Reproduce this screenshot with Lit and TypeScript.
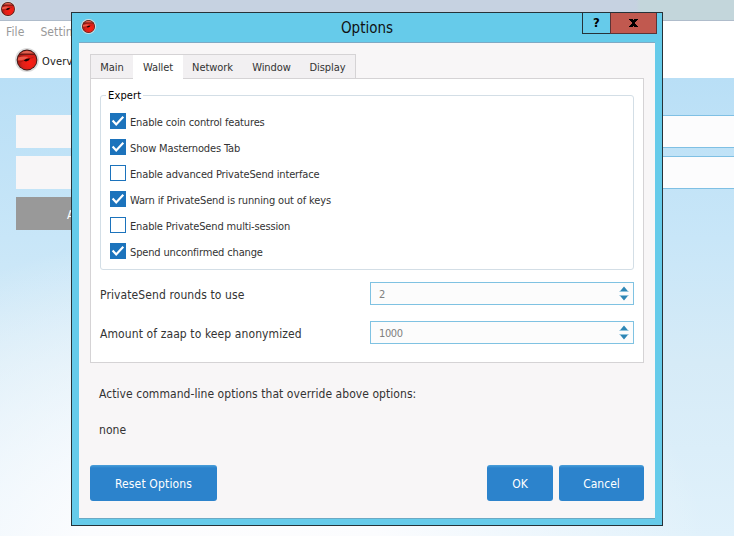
import { LitElement, html, css } from "lit";
import { customElement, property } from "lit/decorators.js";
import { classMap } from "lit/directives/class-map.js";

@customElement("app-logo")
class AppLogo extends LitElement {
  static styles = css`
    :host { display: block; }
    svg { display: block; width: 100%; height: 100%; }
  `;
  render() {
    return html`<svg viewBox="0 0 24 24">
      <defs>
        <radialGradient id="g" cx=".65" cy=".66" r=".65">
          <stop offset="0" stop-color="#ff1d12" />
          <stop offset=".6" stop-color="#dc2019" />
          <stop offset="1" stop-color="#9a1a14" />
        </radialGradient>
      </defs>
      <circle cx="12" cy="12" r="12" fill="#dcdcdc" />
      <circle cx="12" cy="12" r="10.4" fill="#3a1a18" />
      <circle cx="12" cy="12" r="9.5" fill="url(#g)" />
      <path d="M4.8 5.8Q12 -.2 19.2 5.8Z" fill="#e0604f" />
      <path d="M4 6.2H20" stroke="#5a1713" stroke-width="1.1" />
      <path d="M3.2 9.6Q8 7.6 13.5 9L10 11.2Q6 12.4 2.8 12.4Z" fill="#ea5a4a" />
      <path d="M8.6 12.6L11 11L15 10.3L14 12.2L11 13.4Z" fill="#120303" />
      <path d="M15 10.4L18.5 9.4M4.4 14.2L8.6 12.8" stroke="#9a1812" stroke-width=".6" />
    </svg>`;
  }
}

@customElement("check-row")
class CheckRow extends LitElement {
  @property() label = "";
  @property({ type: Boolean }) checked = false;
  static styles = css`
    :host { display: flex; align-items: center; height: 16px; gap: 4px; }
    .box { box-sizing: border-box; width: 16px; height: 16px; border: 1px solid #1c73bc; background: #fff; }
    .box.on { background: #1c73bc; }
    svg { display: block; width: 14px; height: 14px; }
    .text { font-size: 11px; letter-spacing: -0.15px; line-height: 16px; padding-top: 3px; white-space: nowrap; color: #333; }
  `;
  render() {
    return html`<span class=${classMap({ box: true, on: this.checked })}>
        ${this.checked
          ? html`<svg viewBox="0 0 14 14"><path d="M1.6 6.6L5.2 10.4L12.3 2.8" fill="none" stroke="#fff" stroke-width="2.2" /></svg>`
          : ""}
      </span><span class="text">${this.label}</span>`;
  }
}

@customElement("spin-box")
class SpinBox extends LitElement {
  @property() value = "";
  static styles = css`
    :host { box-sizing: border-box; display: flex; justify-content: space-between; align-items: center;
      width: 264px; height: 23px; border: 1px solid #7fc2e2; background: #fcfcfc; padding: 0 4px 0 8px; }
    .value { font-size: 11px; letter-spacing: -0.4px; line-height: 21px; color: #808080; padding-top: 2px; }
    svg { display: block; width: 10px; height: 15px; }
  `;
  render() {
    return html`<span class="value">${this.value}</span>
      <svg viewBox="0 0 10 15">
        <path d="M.8 5.5L5 .5L9.2 5.5Z M.8 9.5L5 14.5L9.2 9.5Z" fill="#2e86b5" />
        <path d="M.5 5.5h9M.5 9.5h9" stroke="#8fc3dc" stroke-width="1" />
      </svg>`;
  }
}

const TABS = ["Main", "Wallet", "Network", "Window", "Display"];

const OPTIONS: [string, boolean][] = [
  ["Enable coin control features", true],
  ["Show Masternodes Tab", true],
  ["Enable advanced PrivateSend interface", false],
  ["Warn if PrivateSend is running out of keys", true],
  ["Enable PrivateSend multi-session", false],
  ["Spend unconfirmed change", true],
];

@customElement("options-dialog")
class OptionsDialog extends LitElement {
  static styles = css`
    :host { box-sizing: border-box; display: flex; flex-direction: column; width: 592px; height: 514px;
      border: 1px solid #263238; background: #66cbea; padding: 0 7px 6px; color: #333; }
    .title { display: grid; grid-template-columns: 1fr auto 1fr; height: 29px; }
    .title app-logo { width: 15px; height: 15px; margin: 6px 0 0 2px; }
    .title h1 { margin: 0; font-weight: 400; font-size: 15px; line-height: 31px; color: #111; }
    .controls { display: flex; justify-content: flex-end; margin-right: -2px; }
    .ctl { box-sizing: border-box; height: 21px; border: 1px solid #263238; border-top: 0; display: grid; place-items: center;
      width: 29px; font: bold 13px/20px "DejaVu Sans Condensed", "DejaVu Sans", sans-serif; color: #000; }
    .ctl.close { width: 47px; margin-left: -1px; background: #c1594f; border-color: #5c3436; }
    .ctl svg { display: block; width: 9px; height: 8px; }
    .body { box-sizing: border-box; flex: 1; background: #f8f6f7; border-top: 1px solid #7fa9c4; border-bottom: 1px solid #6ba9c4;
      padding: 11px 11px 0; display: flex; flex-direction: column; }
    .tabs { box-sizing: border-box; display: flex; width: 266px; height: 24px; border: 1px solid #d5d3d5; border-bottom: 0; background: #f2f0f2; }
    .tab { font-size: 11px; letter-spacing: -0.08px; line-height: 25px; text-align: center; white-space: nowrap; }
    .tab.main { width: 42px; }
    .tab.wallet { width: 50px; background: #fff; margin-bottom: -1px; z-index: 1; }
    .tab.network { width: 59px; } .tab.window { width: 59px; } .tab.display { width: 53px; }
    .pane { box-sizing: border-box; height: 285px; border: 1px solid #d5d3d5; background: #fff; padding: 8px 9px 0; }
    fieldset { box-sizing: border-box; margin: 0; min-width: 0; width: 534px; height: 183px; border: 1px solid #d3dee6; border-radius: 3px; padding: 0 9px; }
    legend { padding: 1px 2px 0; margin: 0 0 0 -4px; font-size: 11px; letter-spacing: 0.15px; line-height: 16px; color: #000; }
    .checks { display: flex; flex-direction: column; gap: 10px; padding-top: 9px; }
    .row { display: flex; justify-content: space-between; align-items: center; height: 23px; margin-top: 12px; font-size: 12px; letter-spacing: 0.1px; }
    .row + .row { margin-top: 16px; }
    .row .label { padding-top: 2px; }
    .note { margin: 21px 0 0 9px; font-size: 12px; letter-spacing: 0.055px; line-height: 20px; white-space: nowrap; }
    .note + .note { margin-top: 16px; }
    .actions { display: flex; gap: 6px; margin-top: 25px; }
    button { box-sizing: border-box; height: 36px; border: 0; border-radius: 3px; padding: 1px 0 0; font: inherit; font-size: 12px; color: #fff;
      background: linear-gradient(#4ba0da 0, #2c83cc 3px); width: 85px; }
    .reset { width: 127px; margin-right: auto; letter-spacing: 0.15px; }
    .ok { width: 66px; }
  `;
  render() {
    return html`
      <div class="title">
        <app-logo></app-logo>
        <h1>Options</h1>
        <div class="controls">
          <span class="ctl">?</span>
          <span class="ctl close"><svg viewBox="0 0 9 8" shape-rendering="crispEdges"><path d="M0 0H4V1H5V0H9V1H8V2H7V3H6V5H7V6H8V7H9V8H5V7H4V8H0V7H1V6H2V5H3V3H2V2H1V1H0Z" fill="#000" /></svg></span>
        </div>
      </div>
      <div class="body">
        <div class="tabs">
          ${TABS.map((t) => html`<span class="tab ${t.toLowerCase()}">${t}</span>`)}
        </div>
        <div class="pane">
          <fieldset>
            <legend>Expert</legend>
            <div class="checks">
              ${OPTIONS.map(([l, on]) => html`<check-row .label=${l} .checked=${on}></check-row>`)}
            </div>
          </fieldset>
          <div class="row"><span class="label">PrivateSend rounds to use</span><spin-box value="2"></spin-box></div>
          <div class="row"><span class="label">Amount of zaap to keep anonymized</span><spin-box value="1000"></spin-box></div>
        </div>
        <div class="note">Active command-line options that override above options:</div>
        <div class="note">none</div>
        <div class="actions">
          <button class="reset">Reset Options</button>
          <button class="ok">OK</button>
          <button>Cancel</button>
        </div>
      </div>
    `;
  }
}

@customElement("app-root")
class AppRoot extends LitElement {
  static styles = css`
    :host { display: flex; flex-direction: column; position: relative; width: 734px; height: 536px; overflow: hidden;
      font-family: "DejaVu Sans Condensed", "DejaVu Sans", sans-serif; font-stretch: condensed; }
    .bar { box-sizing: border-box; height: 21px; background: linear-gradient(90deg, #c6d2e1 0 636px, #c3d6db 640px); border-bottom: 1px solid #afbccb; }
    .bar app-logo { width: 16px; height: 16px; margin-top: 1px; }
    .menu { display: flex; gap: 16px; height: 21px; padding-left: 6px; background: #fff; font-size: 12px; letter-spacing: 0.1px; line-height: 23px; color: #999; }
    .tools { display: flex; align-items: center; gap: 3px; height: 36px; padding-left: 15px; background: #fff; font-size: 11px; letter-spacing: 0.2px; color: #222; }
    .tools app-logo { width: 24px; height: 24px; }
    .tools span { padding-top: 2px; }
    .content { flex: 1; display: flex; flex-direction: column; gap: 8px; padding: 37px 0 0 16px;
      background: radial-gradient(ellipse 480px 340px at 230px 490px, #fdfdfe 0, #fbfcfe 32%, #ffffff00 100%),
        linear-gradient(#b9dff6 0, #c8e6f8 35%, #d6ebf7 62%, #e0f1fb 100%); }
    .field { display: flex; height: 33px; }
    .name { width: 484px; background: #f8f6f7; }
    .input { box-sizing: border-box; flex: 1; background: #fcfcfd; border: solid #7fc0e4; border-width: 1px 0; }
    .add { height: 33px; width: 120px; box-sizing: border-box; padding-left: 51px; background: #999; color: #fff; font-size: 12px; line-height: 36px; }
    options-dialog { position: absolute; left: 71px; top: 12px; }
  `;
  render() {
    return html`
      <div class="bar"><app-logo></app-logo></div>
      <div class="menu"><span>File</span><span>Settings</span></div>
      <div class="tools"><app-logo></app-logo><span>Overview</span></div>
      <div class="content">
        <div class="field"><div class="name"></div><div class="input"></div></div>
        <div class="field"><div class="name"></div><div class="input"></div></div>
        <div class="add">A</div>
      </div>
      <options-dialog></options-dialog>
    `;
  }
}
